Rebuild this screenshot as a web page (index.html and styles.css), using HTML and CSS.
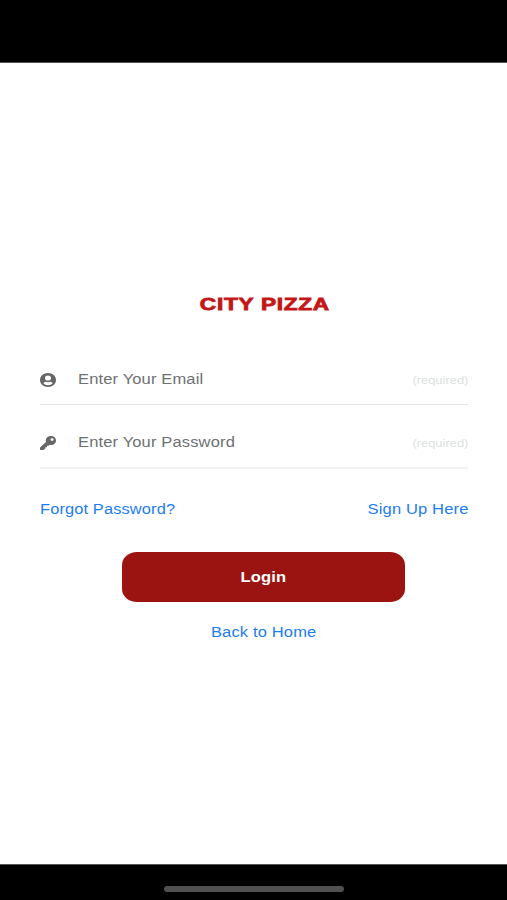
FILE: index.html
```html
<!DOCTYPE html>
<html lang="en">
<head>
<meta charset="utf-8">
<title>City Pizza</title>
<link rel="stylesheet" href="styles.css">
</head>
<body>
<div class="top-bar"></div>
<main class="login">
  <h1 class="brand"><span class="wide">CITY PIZZA</span></h1>
  <div class="field">
    <svg class="icon" viewBox="0 0 16 14" preserveAspectRatio="none"><path fill-rule="evenodd" d="M8 0C12.500 0 16 3 16 7s-3.500 7-8 7-8-3-8-7 3.500-7 8-7zM8 2.400a3 2.600 0 1 0 0 5.200 3 2.600 0 0 0 0-5.200zM3.300 10.300Q5 12.300 8 12.300t4.700-2Q12 8.800 10.300 8.800 8 9.600 5.700 8.800 4 8.800 3.300 10.300z"/></svg>
    <span class="label"><span class="wide">Enter Your Email</span></span>
    <span class="required"><span class="wide">(required)</span></span>
  </div>
  <div class="field field-password">
    <svg class="icon" viewBox="0 0 16 14" preserveAspectRatio="none"><path fill-rule="evenodd" d="M11 0c3 0 5 1.900 5 4.500S13.900 9 11 9L9.600 8.800 8.500 9.800H7v1.400H5.300v1.300L3.500 14H.7Q0 14 0 13.400V11.500L6 6C5 2.700 7.400 0 11 0zM12.100 2.200a1.600 1.400 0 1 0 0 2.800 1.600 1.400 0 0 0 0-2.800z"/></svg>
    <span class="label"><span class="wide">Enter Your Password</span></span>
    <span class="required"><span class="wide">(required)</span></span>
  </div>
  <nav class="links">
    <a class="forgot"><span class="wide">Forgot Password?</span></a>
    <a class="signup"><span class="wide">Sign Up Here</span></a>
  </nav>
  <button class="submit"><span class="wide">Login</span></button>
  <a class="home"><span class="wide">Back to Home</span></a>
</main>
<footer class="bottom-bar"><div class="handle"></div></footer>
</body>
</html>
```
FILE: styles.css
```css
* { box-sizing: border-box; }
body {
  margin: 0;
  height: 900px;
  display: flex;
  flex-direction: column;
  overflow: hidden;
  background: #fff;
  font: 14px/20px "Liberation Sans", Arial, sans-serif;
}
.top-bar { height: 63px; background: #000; border-bottom: 1px solid #555; }
.login {
  flex: 1;
  display: flex;
  flex-direction: column;
  padding: 232px 39px 0 40px;
}
.wide { display: inline-block; white-space: nowrap; letter-spacing: .12px; transform: scaleX(1.18); transform-origin: left; }
.brand { margin: 0 0 0 21px; align-self: center; font-size: 17px; line-height: 20px; color: #c41616; }
.brand .wide { letter-spacing: .55px; transform: scaleX(1.33); transform-origin: center; -webkit-text-stroke: .8px #c41616; }
.field {
  height: 64px;
  display: flex;
  align-items: center;
  border-bottom: 1px solid #e4e4e4;
  color: #6e7072;
}
.brand + .field { margin-top: 26px; padding-top: 14px; }
.field-password { padding-top: 13px; border-bottom: 2px solid #f2f2f2; }
.icon { width: 16px; height: 14px; fill: #666; }
.label { margin-left: 22px; padding-bottom: 2px; }
.required { margin-left: auto; padding-top: 2px; font-size: 10px; color: #dcdfdf; }
.required .wide { letter-spacing: 0; transform: scaleX(1.29); transform-origin: right; }
.links { display: flex; justify-content: space-between; margin-top: 30px; color: #1c7df2; }
.forgot .wide { transform: scaleX(1.17); }
.signup .wide { transform-origin: right; }
.submit {
  align-self: center;
  width: 283px;
  height: 50px;
  margin-top: 33px;
  margin-left: 19px;
  border: 0;
  border-radius: 15px / 13px;
  background: #9c1411;
  color: #fff;
  font: bold 14px/20px "Liberation Sans", Arial, sans-serif;
}
.submit .wide, .home .wide { transform-origin: center; }
.home { align-self: center; margin-top: 20px; margin-left: 19px; color: #1c7df2; }
.bottom-bar { height: 36px; background: #000; border-top: 1px solid #555; display: flex; justify-content: center; padding-top: 21px; }
.handle { width: 180px; height: 6px; margin-left: 1px; border-radius: 3px; background: #505050; }
```
